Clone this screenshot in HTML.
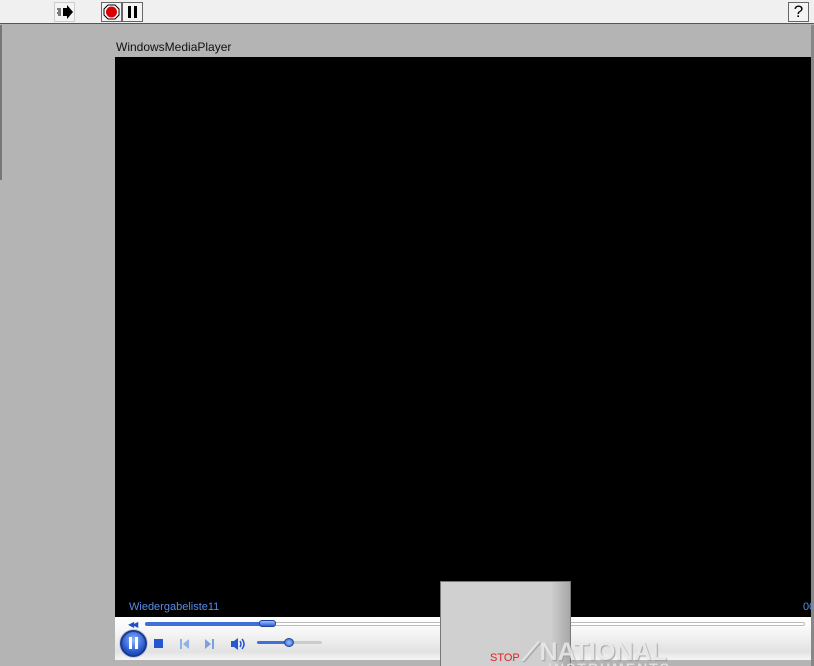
<!DOCTYPE html>
<html><head><meta charset="utf-8"><style>
*{margin:0;padding:0;box-sizing:border-box}
html,body{width:814px;height:666px;overflow:hidden}
body{background:#b4b4b4;position:relative;font-family:"Liberation Sans",sans-serif}
.tb{position:absolute;left:0;top:0;width:814px;height:24px;background:#f0f0f0;border-bottom:1px solid #555}
.btn{position:absolute;top:2px;width:21px;height:20px;background:#f4f4f4;border:1px solid #999}
.abs{position:absolute}
</style></head><body>
<div class="tb">
 <div class="btn" style="left:54px;border:1px solid #ccc"><svg width="19" height="18"><path d="M8 5h4V2l6 7-6 7v-3H8z" fill="#000"/><path d="M2 6h4M3 8h3M2 10h4M3 12h3" stroke="#000"/></svg></div>
 <div class="btn" style="left:101px;border:1px solid #666"><svg width="19" height="18"><polygon points="6,2 13,2 17,6 17,12 13,16 6,16 2,12 2,6" fill="#fff" stroke="#000"/><circle cx="9.5" cy="9" r="5.5" fill="#d00"/></svg></div>
 <div class="btn" style="left:122px;border:1px solid #666"><div class="abs" style="left:5px;top:3px;width:3px;height:12px;background:#000"></div><div class="abs" style="left:11px;top:3px;width:3px;height:12px;background:#000"></div></div>
 <div class="btn" style="left:788px;border:1px solid #666;font-size:17px;text-align:center;line-height:18px;color:#000">?</div>
</div>
<div class="abs" style="left:0;top:25px;width:2px;height:155px;background:#777"></div>
<div class="abs" style="left:811px;top:25px;width:3px;height:641px;background:#888"></div>
<div class="abs" style="left:116px;top:40px;font-size:12px;color:#111">WindowsMediaPlayer</div>
<div class="abs" style="left:115px;top:57px;width:696px;height:560px;background:#000"></div>
<div class="abs" style="left:129px;top:601px;font-size:11px;color:#5a8ce8">Wiedergabeliste11</div>
<div class="abs" style="left:803px;top:601px;font-size:11px;color:#5a8ce8">00</div>
<div class="abs" style="left:115px;top:617px;width:696px;height:43px;background:linear-gradient(#fff,#f4f4f4 40%,#e2e2e2 80%,#f6f6f6)"></div>
<div class="abs" style="left:128px;top:620px;font-size:8px;color:#2050c0;letter-spacing:-2px">◀◀</div>
<div class="abs" style="left:145px;top:622px;width:660px;height:4px;border:1px solid #bbb;border-radius:2px;background:#fff"></div>
<div class="abs" style="left:145px;top:622px;width:122px;height:4px;background:#3f6fd8;border-radius:2px"></div>
<div class="abs" style="left:259px;top:620px;width:17px;height:7px;background:linear-gradient(#9cc0ff,#2d5fcc);border:1px solid #1c44a0;border-radius:3px"></div>
<div class="abs" style="left:120px;top:630px;width:27px;height:27px;border-radius:50%;background:radial-gradient(circle at 50% 35%,#8fb4ff,#1e4fc4 70%);border:2px solid #1a3a90;box-shadow:0 0 0 1px #ccd"></div>
<div class="abs" style="left:129px;top:637px;width:3px;height:12px;background:#fff"></div>
<div class="abs" style="left:135px;top:637px;width:3px;height:12px;background:#fff"></div>
<div class="abs" style="left:154px;top:639px;width:9px;height:9px;background:#2557d0"></div>
<svg class="abs" style="left:178px;top:637px" width="70" height="14"><path d="M2 2h2v10H2zM11 2v10L5 7z" fill="#8fb0e8"/><path d="M27 2v10l6-5zM34 2h2v10h-2z" fill="#7fa0e0"/><path d="M53 4h3l4-3v12l-4-3h-3z" fill="#2557d0"/><path d="M62 4q2 3 0 6M64 2q4 5 0 10" stroke="#2557d0" fill="none" stroke-width="1.5"/></svg>
<div class="abs" style="left:257px;top:641px;width:65px;height:3px;background:#ccc;border-radius:2px"></div>
<div class="abs" style="left:257px;top:641px;width:32px;height:3px;background:#3f6fd8;border-radius:2px"></div>
<div class="abs" style="left:284px;top:638px;width:10px;height:9px;border-radius:50%;background:radial-gradient(#9cc0ff,#2d5fcc);border:1px solid #1c44a0"></div>
<div class="abs" style="left:115px;top:660px;width:696px;height:6px;background:#b4b4b4"></div>
<div class="abs" style="left:440px;top:581px;width:131px;height:85px;background:linear-gradient(90deg,#d0d0d0,#cfcfcf 85%,#a8a8a8);border:1px solid #777;border-bottom:none"></div>
<div class="abs" style="left:490px;top:652px;font-size:11px;color:#e02020">STOP</div>
<div class="abs" style="left:522px;top:638px;font-size:25px;font-weight:bold;color:#e8e8e8;opacity:.85;text-shadow:1px 1px 1px #999;white-space:nowrap">⟋NATIONAL</div>
<div class="abs" style="left:548px;top:660px;font-size:14px;font-weight:bold;color:#ddd;letter-spacing:2px;white-space:nowrap">INSTRUMENTS</div>
</body></html>
